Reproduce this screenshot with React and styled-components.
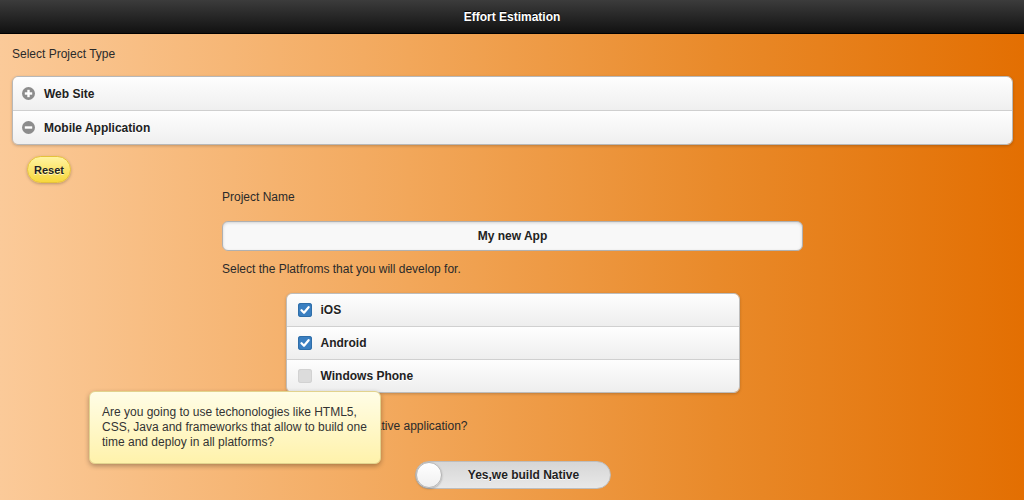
import { useState } from "react";
import styled, { createGlobalStyle } from "styled-components";

const GlobalStyle = createGlobalStyle`
  body {
    margin: 0;
    font-family: "Liberation Sans", Arial, Helvetica, sans-serif;
    font-size: 12px;
    color: #333;
  }
`;

const projectTypes = [
  { name: "Web Site", open: false },
  { name: "Mobile Application", open: true },
];

const platforms = [
  { name: "iOS", checked: true },
  { name: "Android", checked: true },
  { name: "Windows Phone", checked: false },
];

function CircleIcon({ open }) {
  return (
    <svg width="13" height="13" viewBox="0 0 13 13">
      <circle cx="6.5" cy="6.5" r="6.5" fill="#8c8c8c" />
      <rect x="2.8" y="5.3" width="7.4" height="2.4" fill="#fff" />
      {!open && <rect x="5.3" y="2.8" width="2.4" height="7.4" fill="#fff" />}
    </svg>
  );
}

function CheckMark() {
  return (
    <svg width="10" height="10" viewBox="0 0 10 10">
      <path
        d="M1.5 5.2 L4 7.8 L8.6 2.2"
        fill="none"
        stroke="#fff"
        strokeWidth="2.2"
        strokeLinecap="round"
        strokeLinejoin="round"
      />
    </svg>
  );
}

export default function App() {
  const [checks, setChecks] = useState(platforms.map((p) => p.checked));
  const [name, setName] = useState("My new App");

  return (
    <Page>
      <GlobalStyle />
      <Header>Effort Estimation</Header>
      <Content>
        <Label>Select Project Type</Label>
        <Collapsible>
          {projectTypes.map((t) => (
            <CollapsibleRow key={t.name}>
              <CircleIcon open={t.open} />
              <span>{t.name}</span>
            </CollapsibleRow>
          ))}
        </Collapsible>
        <ResetButton>Reset</ResetButton>
        <Form>
          <Label $top={7}>Project Name</Label>
          <TextInput value={name} onChange={(e) => setName(e.target.value)} />
          <Label $top={11}>Select the Platfroms that you will develop for.</Label>
          <CheckGroup>
            {platforms.map((p, i) => (
              <CheckRow
                key={p.name}
                onClick={() =>
                  setChecks(checks.map((c, j) => (j === i ? !c : c)))
                }
              >
                <Box $checked={checks[i]}>{checks[i] && <CheckMark />}</Box>
                <span>{p.name}</span>
              </CheckRow>
            ))}
          </CheckGroup>
          <Label $top={26}>Are you going to develop a native application?</Label>
          <Switch>
            <Knob />
            <SwitchText>Yes,we build Native</SwitchText>
          </Switch>
        </Form>
      </Content>
      <Tooltip>
        Are you going to use techonologies like HTML5, CSS, Java and frameworks
        that allow to build one time and deploy in all platforms?
      </Tooltip>
    </Page>
  );
}

const Page = styled.div`
  position: relative;
  min-height: 500px;
  overflow: hidden;
  background: linear-gradient(to right, #fbca99 0%, #f2a75a 40%, #e98a2a 70%, #e36f02 100%);
`;

const Header = styled.div`
  height: 34px;
  display: flex;
  align-items: center;
  justify-content: center;
  background: linear-gradient(#3c3c3c, #111);
  border-bottom: 1px solid #000;
  box-sizing: border-box;
  color: #fff;
  font-weight: bold;
  font-size: 12px;
  text-shadow: 0 -1px 1px #000;
`;

const Content = styled.div`
  padding: 0 11px 10px 12px;
  display: flex;
  flex-direction: column;
`;

const Label = styled.div`
  margin-top: ${(p) => p.$top ?? 13}px;
  line-height: 14px;
  font-size: 12px;
  color: #2a2a2a;
`;

const Collapsible = styled.div`
  margin-top: 15px;
  border: 1px solid #b8b8b8;
  border-radius: 6px;
  overflow: hidden;
  box-shadow: 0 1px 3px rgba(0, 0, 0, 0.2);
`;

const CollapsibleRow = styled.div`
  height: 33px;
  display: flex;
  align-items: center;
  gap: 9px;
  padding-left: 9px;
  background: linear-gradient(#fefefe, #efefef);
  font-weight: bold;
  font-size: 12px;
  color: #222;
  text-shadow: 0 1px 0 #fff;
  & + & {
    border-top: 1px solid #cfcfcf;
  }
`;

const ResetButton = styled.button`
  align-self: flex-start;
  margin: 11px 0 0 15px;
  width: 44px;
  height: 27px;
  padding: 0;
  border: 1px solid #e5c23a;
  border-radius: 14px;
  background: linear-gradient(#fff3a0, #f7d73d);
  box-shadow: 0 1px 3px rgba(0, 0, 0, 0.25);
  font-family: inherit;
  font-weight: bold;
  font-size: 11px;
  color: #222;
  text-shadow: 0 1px 0 #fff6c0;
`;

const Form = styled.div`
  width: 581px;
  align-self: center;
  display: flex;
  flex-direction: column;
`;

const TextInput = styled.input`
  margin-top: 17px;
  height: 30px;
  box-sizing: border-box;
  border: 1px solid #b0b0b0;
  border-radius: 6px;
  background: #f8f8f8;
  box-shadow: inset 0 1px 3px rgba(0, 0, 0, 0.15);
  text-align: center;
  font-family: inherit;
  font-weight: bold;
  font-size: 12px;
  color: #222;
  outline: none;
`;

const CheckGroup = styled.div`
  margin-top: 17px;
  width: 452px;
  align-self: center;
  border: 1px solid #bdbdbd;
  border-radius: 6px;
  overflow: hidden;
  box-shadow: 0 1px 3px rgba(0, 0, 0, 0.2);
`;

const CheckRow = styled.div`
  height: 32px;
  display: flex;
  align-items: center;
  gap: 9px;
  padding-left: 11px;
  background: linear-gradient(#fefefe, #eeeeee);
  font-weight: bold;
  font-size: 12px;
  color: #222;
  text-shadow: 0 1px 0 #fff;
  cursor: pointer;
  & + & {
    border-top: 1px solid #d0d0d0;
  }
`;

const Box = styled.span`
  width: 14px;
  height: 14px;
  border-radius: 3px;
  display: flex;
  align-items: center;
  justify-content: center;
  background: ${(p) => (p.$checked ? "#3a7fc1" : "#dcdcdc")};
  box-shadow: ${(p) =>
    p.$checked ? "inset 0 0 0 1px #2f6ea8" : "inset 0 0 0 1px #d2d2d2"};
`;

const Switch = styled.div`
  margin-top: 28px;
  align-self: center;
  width: 196px;
  height: 28px;
  box-sizing: border-box;
  border: 1px solid #bdbdbd;
  border-radius: 14px;
  background: linear-gradient(#d6d6d6, #e8e8e8);
  display: flex;
  align-items: center;
  position: relative;
`;

const Knob = styled.span`
  width: 26px;
  height: 26px;
  box-sizing: border-box;
  border-radius: 50%;
  border: 1px solid #b5b5b5;
  background: linear-gradient(#fff, #f0f0f0);
  box-shadow: 0 1px 2px rgba(0, 0, 0, 0.25);
`;

const SwitchText = styled.span`
  flex: 1;
  text-align: center;
  padding-right: 4px;
  font-weight: bold;
  font-size: 12px;
  color: #222;
  text-shadow: 0 1px 0 #fff;
`;

const Tooltip = styled.div`
  position: absolute;
  left: 89px;
  top: 391px;
  width: 292px;
  height: 73px;
  box-sizing: border-box;
  padding: 13px 6px 0 12px;
  border: 1px solid #e2d38e;
  border-radius: 6px;
  background: linear-gradient(#fffde6, #fff2ab);
  box-shadow: 0 2px 5px rgba(0, 0, 0, 0.3);
  font-size: 12px;
  line-height: 15px;
  color: #333;
`;
